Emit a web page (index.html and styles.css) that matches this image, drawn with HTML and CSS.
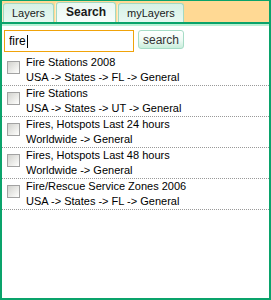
FILE: index.html
```html
<!DOCTYPE html>
<html>
<head>
    <title>Layer Search</title>
    <link rel="stylesheet" href="styles.css">
</head>
<body>
    <div class="panel">
        <div class="tabs">
            <div class="tab">Layers</div>
            <div class="tab active">Search</div>
            <div class="tab">myLayers</div>
        </div>

        <div class="search-row">
            <div class="field">
                <input class="search-input" type="text" value="fire">
                <span class="caret"></span>
            </div>
            <button class="search-btn">search</button>
        </div>

        <ul class="results">
            <li class="result">
                <input class="check" type="checkbox">
                <div class="info">
                    <div class="title">Fire Stations 2008</div>
                    <div class="path">USA -&gt; States -&gt; FL -&gt; General</div>
                </div>
            </li>
            <li class="result">
                <input class="check" type="checkbox">
                <div class="info">
                    <div class="title">Fire Stations</div>
                    <div class="path">USA -&gt; States -&gt; UT -&gt; General</div>
                </div>
            </li>
            <li class="result">
                <input class="check" type="checkbox">
                <div class="info">
                    <div class="title">Fires, Hotspots Last 24 hours</div>
                    <div class="path">Worldwide -&gt; General</div>
                </div>
            </li>
            <li class="result">
                <input class="check" type="checkbox">
                <div class="info">
                    <div class="title">Fires, Hotspots Last 48 hours</div>
                    <div class="path">Worldwide -&gt; General</div>
                </div>
            </li>
            <li class="result">
                <input class="check" type="checkbox">
                <div class="info">
                    <div class="title">Fire/Rescue Service Zones 2006</div>
                    <div class="path">USA -&gt; States -&gt; FL -&gt; General</div>
                </div>
            </li>
        </ul>
    </div>
</body>
</html>
```

FILE: styles.css
```css
body {
    margin: 0;
    font-family: "Liberation Sans", Arial, sans-serif;
    font-size: 11px;
    color: #000;
}
.panel {
    width: 271px;
    height: 300px;
    box-sizing: border-box;
    border: 2px solid #0aa36b;
    border-top-width: 1px;
    background: #fff;
}
.tabs {
    display: flex;
    align-items: flex-end;
    gap: 2px;
    height: 21px;
    padding-left: 1px;
    background: #ffd994;
    border-bottom: 2px solid #0aa36b;
}
.tab {
    height: 19px;
    box-sizing: border-box;
    padding: 0 8px;
    border: 1px solid #a3d9c3;
    border-bottom: none;
    border-radius: 3px 3px 0 0;
    background: linear-gradient(#d6f1e6, #e9f8f1);
    color: #1a1a1a;
    line-height: 18px;
    box-shadow: -1px 0 0 #ffeec4;
}
.tab.active {
    height: 20px;
    padding: 0 9px;
    font-size: 12px;
    font-weight: bold;
    line-height: 19px;
    background: linear-gradient(#e9f8f2, #f8fdfb);
}
.search-row {
    display: flex;
    align-items: flex-start;
    gap: 4px;
    padding: 4px 0 3px 2px;
    border-top: 2px solid #b9f1d6;
}
.field {
    position: relative;
}
.search-input {
    display: block;
    width: 130px;
    height: 22px;
    box-sizing: border-box;
    margin: 0;
    padding: 0 4px;
    border: 1px solid #f0a30a;
    font-family: "Liberation Sans", Arial, sans-serif;
    font-size: 12px;
    color: #000;
    outline: none;
}
.caret {
    position: absolute;
    left: 23px;
    top: 5px;
    width: 1px;
    height: 13px;
    background: #000;
}
.search-btn {
    width: 46px;
    height: 19px;
    box-sizing: border-box;
    margin: 0;
    padding: 0;
    border: 1px solid #a6dcc6;
    border-radius: 3px;
    background: linear-gradient(#ffffff, #eefaf4 55%, #c9eedc);
    font-family: "Liberation Sans", Arial, sans-serif;
    font-size: 12px;
    color: #333;
}
.results {
    list-style: none;
    margin: 0;
    padding: 0;
}
.result {
    display: flex;
    align-items: flex-start;
    height: 30px;
    padding-left: 5px;
    border-bottom: 1px dotted #999;
}
.check {
    appearance: none;
    width: 13px;
    height: 13px;
    margin: 6px 6px 0 0;
    border: 1px solid #a2a2a2;
    background: linear-gradient(135deg, #d2d2ce, #f6f6f4 80%, #fff);
}
.info {
    line-height: 15px;
}
```
